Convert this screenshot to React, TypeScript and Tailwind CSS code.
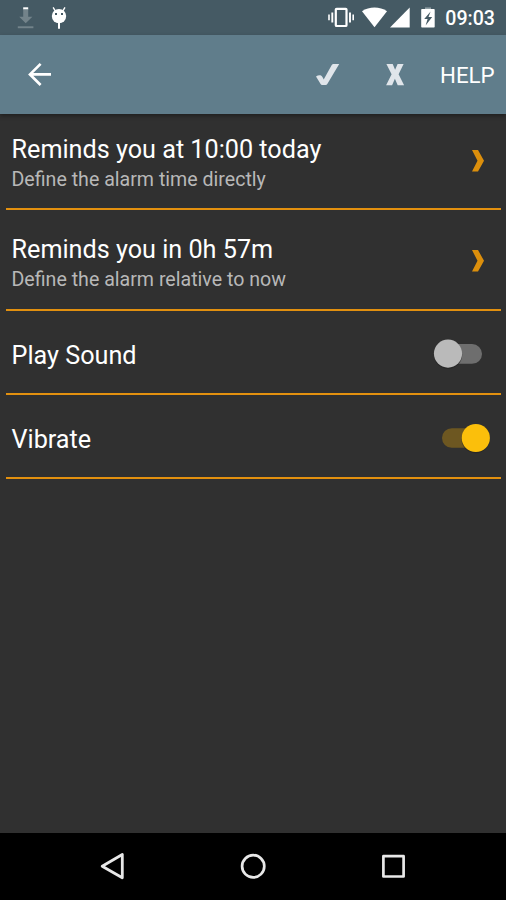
import React from 'react';

function StatusBar() {
  return (
    <header className="flex h-[35px] shrink-0 items-center bg-[#455a64] pl-[17px] pr-[11px]">
      <svg className="h-[35px] w-[17px]" viewBox="17 0 17 35" fill="#73838a">
        <rect x="23.2" y="7.3" width="5" height="2.3" fill="#fff" />
        <path d="M23.2 9.6h5v7.1h4.2l-6.7 6.5-6.5-6.5h4z" />
        <rect x="17.8" y="26.3" width="15.6" height="1.9" />
      </svg>
      <svg className="ml-[17px] h-[35px] w-[17px]" viewBox="51 0 17 35">
        <circle cx="59" cy="16.1" r="7.2" fill="#fff" />
        <path d="M53.4 7.8l2.2 3.5M64.7 7.8l-2.2 3.5" stroke="#fff" strokeWidth="1.4" strokeLinecap="round" />
        <path d="M59 22.5v6.3" stroke="#fff" strokeWidth="2" />
        <rect x="55" y="13" width="2" height="2" fill="#455a64" />
        <rect x="61" y="13" width="2" height="2" fill="#455a64" />
      </svg>
      <svg className="ml-auto h-[35px] w-[27px]" viewBox="327 0 27 35" fill="none" stroke="#fff">
        <rect x="335.8" y="8.8" width="10.7" height="17.2" rx="0.8" strokeWidth="2.2" />
        <path d="M332.3 12.4v10M350 12.4v10" strokeWidth="1.9" />
        <path d="M329 14.5v5.8M353.2 14.5v5.8" strokeWidth="1.6" />
      </svg>
      <svg className="ml-[8px] h-[35px] w-[25px]" viewBox="362 0 25 35" fill="#fff">
        <path d="M362 11.3c7-5 18-5 25 0l-12.5 16z" />
      </svg>
      <svg className="ml-[3px] h-[35px] w-[20px]" viewBox="390 0 20 35" fill="#fff">
        <path d="M390 27.5L409.7 7.6v19.9z" />
      </svg>
      <svg className="ml-[11px] h-[35px] w-[14px]" viewBox="421 0 14 35">
        <rect x="425" y="7.4" width="6" height="2.2" fill="#91a0a6" />
        <rect x="421.2" y="9" width="13.5" height="18.5" rx="0.8" fill="#fff" />
        <path d="M430.6 11.6l-6.4 7.4h3.4l-2 6.4 6.6-8.4h-3.7z" fill="#455a64" />
      </svg>
      <span className="ml-[9px] w-[51px] whitespace-nowrap pt-[3px] text-right text-[19.6px] font-medium leading-[24px]">09:03</span>
    </header>
  );
}

function Toolbar() {
  return (
    <nav className="z-10 flex h-[79px] shrink-0 items-center bg-[#607d8b] pl-[27px] pr-[11px] shadow-[0_2px_4px_rgba(0,0,0,0.35)]">
      <button aria-label="Back">
        <svg className="block h-[79px] w-[25px]" viewBox="27 35 25 79" fill="none" stroke="#fff" strokeWidth="2.7">
          <path d="M51 74.4H30M40.6 63.9L30 74.4l10.6 10.6" />
        </svg>
      </button>
      <button aria-label="Confirm" className="ml-auto">
        <svg className="block h-[79px] w-[25px]" viewBox="315 35 25 79" fill="#e0e5ea">
          <path d="M316 76.4c1.6-1.2 3.6-1.5 5-1 1.300.6 2 2.400 2.700 4.200L331.600 65.300c.5-.9 1.200-1.300 2.200-1.300h5.400L327.300 84c-.4.700-.9 1-1.700 1h-3.400c-.8 0-1.300-.3-1.600-1z" />
        </svg>
      </button>
      <button aria-label="Cancel" className="ml-[45px]">
        <svg className="block h-[79px] w-[20px]" viewBox="385 35 20 79" fill="#e0e5ea">
          <path d="M386.400 64h6.300l2.400 5.800 2.500-5.800h6l-5 10.300 5.500 10.900h-6.400l-2.800-6.500-2.800 6.500h-6l5.500-10.900z" />
        </svg>
      </button>
      <button className="ml-[35px] w-[55px] whitespace-nowrap text-left text-[22.3px] leading-[28px]">HELP</button>
    </nav>
  );
}

function Chevron() {
  return (
    <svg className="mr-[16px] h-[22px] w-[12px]" viewBox="0 0 12 22" fill="#dc8f0c">
      <path d="M0 0h6l6 10.800-6 10.800H0l5.500-10.800z" />
    </svg>
  );
}

function Toggle({ on }: { on: boolean }) {
  return (
    <svg className="h-[34px] w-[66px]" viewBox="428 337 66 34">
      {on ? (
        <>
          <rect x="442" y="344.2" width="40" height="19.6" rx="9.8" fill="#6d5721" />
          <circle cx="475.7" cy="355" r="14.2" fill="#222" opacity="0.6" />
          <circle cx="475.8" cy="354" r="14.1" fill="#fbbf0b" />
        </>
      ) : (
        <>
          <rect x="442" y="344" width="40" height="19.8" rx="9.9" fill="#6e6e6e" />
          <circle cx="448" cy="354.7" r="14.2" fill="#222" opacity="0.6" />
          <circle cx="448" cy="353.6" r="14.1" fill="#bababa" />
        </>
      )}
    </svg>
  );
}

function Divider() {
  return <div className="-mr-[0.5px] h-[2px] shrink-0 bg-[#e2900f]" />;
}

function LinkRow({ title, detail }: { title: string; detail: string }) {
  return (
    <div className="flex items-start justify-between pl-[5.500px]">
      <div className="whitespace-nowrap">
        <div className="text-[25.2px] leading-[30px]">{title}</div>
        <div className="text-[19.6px] leading-[30px] text-[#b8b8b8]">{detail}</div>
      </div>
      <div className="pt-[15px]">
        <Chevron />
      </div>
    </div>
  );
}

function SwitchRow({ title, on }: { title: string; on: boolean }) {
  return (
    <div className="flex h-[34px] items-center justify-between pl-[5.500px] pr-[6px]">
      <div className="pt-[4px] text-[25.2px] leading-[30px]">{title}</div>
      <Toggle on={on} />
    </div>
  );
}

function SystemNav() {
  return (
    <footer className="flex h-[67px] shrink-0 items-center justify-between bg-black pl-[99px] pr-[99px]">
      <svg className="h-[67px] w-[27px]" viewBox="99 833 27 67" fill="none" stroke="#e8e8e8" strokeWidth="2.8" strokeLinejoin="round">
        <path d="M122.300 854.500v23.300L102.200 866.200z" />
      </svg>
      <svg className="h-[67px] w-[27px]" viewBox="239.5 833 27 67" fill="none" stroke="#e8e8e8" strokeWidth="2.7">
        <circle cx="252.700" cy="866.300" r="11.100" />
      </svg>
      <svg className="h-[67px] w-[27px]" viewBox="380 833 27 67" fill="none" stroke="#e8e8e8" strokeWidth="2.7" strokeLinejoin="round">
        <rect x="383.400" y="856.200" width="20.200" height="20.300" />
      </svg>
    </footer>
  );
}

export default function App() {
  return (
    <div className="flex h-[900px] w-[506px] flex-col overflow-hidden bg-[#303030] font-['Roboto',sans-serif] text-white">
      <StatusBar />
      <Toolbar />
      <main className="flex grow flex-col px-[6px]">
        <div className="h-[94px] pt-[21px]">
          <LinkRow title="Reminds you at 10:00 today" detail="Define the alarm time directly" />
        </div>
        <Divider />
        <div className="h-[99px] pt-[25px]">
          <LinkRow title="Reminds you in 0h 57m" detail="Define the alarm relative to now" />
        </div>
        <Divider />
        <div className="h-[82px] pt-[26px]">
          <SwitchRow title="Play Sound" on={false} />
        </div>
        <Divider />
        <div className="h-[82px] pt-[26px]">
          <SwitchRow title="Vibrate" on />
        </div>
        <Divider />
      </main>
      <SystemNav />
    </div>
  );
}
